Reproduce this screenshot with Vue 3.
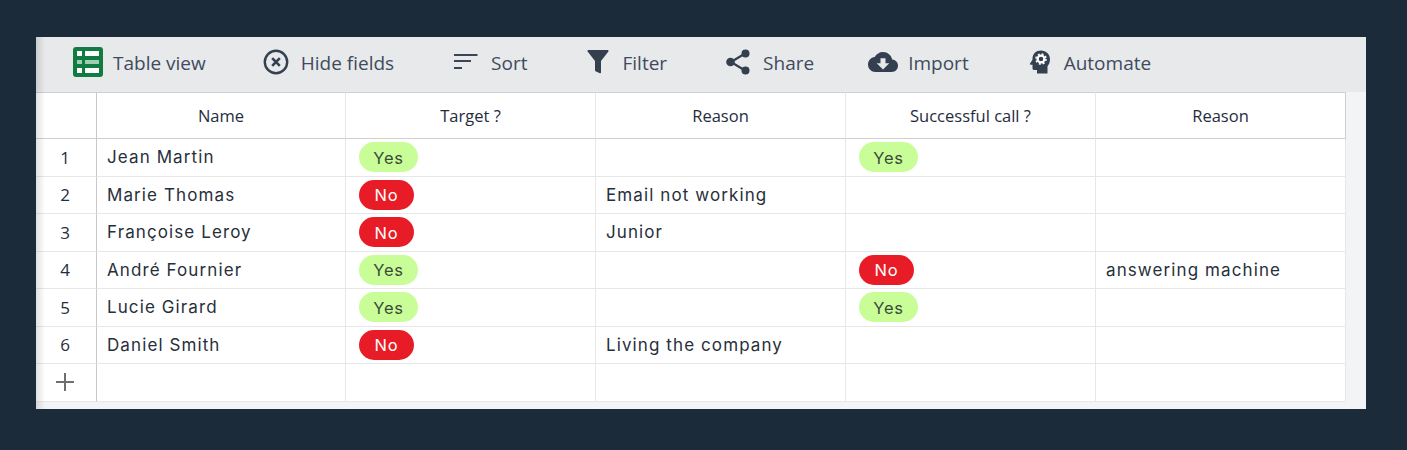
<script setup>
const tools = [
  { label: 'Table view', key: 'table' },
  { label: 'Hide fields', key: 'hide' },
  { label: 'Sort', key: 'sort' },
  { label: 'Filter', key: 'filter' },
  { label: 'Share', key: 'share' },
  { label: 'Import', key: 'import' },
  { label: 'Automate', key: 'auto' },
]
const heads = ['Name', 'Target ?', 'Reason', 'Successful call ?', 'Reason']
const rows = [
  ['Jean Martin', 'Yes', '', 'Yes', ''],
  ['Marie Thomas', 'No', 'Email not working', '', ''],
  ['Françoise Leroy', 'No', 'Junior', '', ''],
  ['André Fournier', 'Yes', '', 'No', 'answering machine'],
  ['Lucie Girard', 'Yes', '', 'Yes', ''],
  ['Daniel Smith', 'No', 'Living the company', '', ''],
]
</script>

<template>
  <div class="page">
    <div class="panel">
      <div class="toolbar">
        <div v-for="t in tools" :key="t.key" class="tool" :class="'tool-' + t.key">
          <svg v-if="t.key === 'table'" width="30" height="30" viewBox="0 0 30 30">
            <rect width="30" height="30" rx="3" fill="#107c41" />
            <path d="M4 4h5v5H4zM12 4h14v5H12zM4 21h5v5H4zM12 21h14v5H12z" fill="#fff" />
            <path d="M4 13h5v4H4zM12 13h14v4H12z" fill="#9fcfb1" />
          </svg>
          <svg v-else-if="t.key === 'hide'" width="26" height="26" viewBox="0 0 26 26">
            <circle cx="13" cy="13" r="11.2" fill="none" stroke="#34404f" stroke-width="2.4" />
            <path d="M9.2 9.2l7.6 7.6M16.8 9.2l-7.6 7.6" stroke="#34404f" stroke-width="2.6" />
          </svg>
          <svg v-else-if="t.key === 'sort'" width="24" height="18" viewBox="0 0 24 18">
            <path d="M0 2h23.500M0 8h17M0 15h8" stroke="#3a4656" stroke-width="2.200" fill="none" />
          </svg>
          <svg v-else-if="t.key === 'filter'" width="22" height="26" viewBox="0 0 22 26">
            <path d="M1.300 1h19.400c.8 0 1.100.8.7 1.400L14 12v11.500c0 .7-.5 1-1.100.7L9 22.500c-.6-.3-1-.7-1-1.300V12L.6 2.400C.2 1.800.5 1 1.300 1z" fill="#34404f" />
          </svg>
          <svg v-else-if="t.key === 'share'" width="24" height="26" viewBox="0 0 24 26">
            <path d="M19 4.500L5 13l14 8.500" stroke="#34404f" stroke-width="2.200" fill="none" />
            <circle cx="19.500" cy="4.500" r="4" fill="#34404f" />
            <circle cx="4.500" cy="13" r="4.300" fill="#34404f" />
            <circle cx="19.500" cy="21.500" r="4" fill="#34404f" />
          </svg>
          <svg v-else-if="t.key === 'import'" width="30" height="30" viewBox="0 0 24 24">
            <path fill="#34404f" d="M19.350 10.040C18.670 6.590 15.640 4 12 4 9.110 4 6.600 5.640 5.350 8.040 2.340 8.360 0 10.910 0 14c0 3.310 2.690 6 6 6h13c2.760 0 5-2.240 5-5 0-2.640-2.050-4.780-4.650-4.960zM17 13l-5 5-5-5h3V9h4v4h3z" />
          </svg>
          <svg v-else width="24" height="26" viewBox="0 0 24 26">
            <path fill="#34404f" d="M13 1.500C8 1.500 4.500 5 4.500 9.800c0 .5-.1 1-.3 1.400L2 14.600c-.3.6 0 1.100.6 1.100h1.900v3.500c0 1 .8 1.800 1.800 1.800H9v3.500h10.500v-7.200c1.500-1.800 2.500-4 2.500-7C22 5 18 1.500 13 1.500z" />
            <circle cx="13" cy="10" r="3.400" fill="none" stroke="#fff" stroke-width="2.200" />
            <circle cx="13" cy="10" r="5" fill="none" stroke="#fff" stroke-width="1.600" stroke-dasharray="2 1.930" />
          </svg>
          <span class="tool-label">{{ t.label }}</span>
        </div>
      </div>
      <div class="grid">
        <div class="cell head num"></div>
        <div v-for="(h, i) in heads" :key="'h' + i" class="cell head">{{ h }}</div>
        <template v-for="(r, ri) in rows" :key="ri">
          <div class="cell num">{{ ri + 1 }}</div>
          <div v-for="(c, ci) in r" :key="ci" class="cell body">
            <span v-if="c === 'Yes' || c === 'No'" class="pill" :class="c === 'Yes' ? 'yes' : 'no'">{{ c }}</span>
            <template v-else>{{ c }}</template>
          </div>
        </template>
        <div class="cell num plus">
          <svg width="18" height="18" viewBox="0 0 18 18">
            <path d="M0 9h18M9 0v18" stroke="#6f6f6f" stroke-width="2" />
          </svg>
        </div>
        <div v-for="n in 5" :key="'e' + n" class="cell body"></div>
      </div>
    </div>
  </div>
</template>

<style>
html, body { margin: 0; background: #1c2b3a; }
</style>

<style scoped>
.page {
  height: 450px;
  box-sizing: border-box;
  padding: 37px 41px 0 36px;
  background: #1c2b3a;
  overflow: hidden;
}
.panel {
  position: relative;
  width: 1330px;
  height: 372px;
  background: #f3f4f6;
  overflow: hidden;
}
.panel::before {
  content: "";
  position: absolute;
  left: 0;
  top: 0;
  bottom: 0;
  width: 9px;
  background: linear-gradient(to right, rgba(0, 0, 0, .12), rgba(0, 0, 0, 0));
  z-index: 2;
  pointer-events: none;
}
.toolbar {
  height: 55px;
  box-sizing: border-box;
  background: #e8e9eb;
  display: flex;
  align-items: center;
  padding: 0 0 5px 37px;
}
.tool {
  display: flex;
  align-items: center;
  color: #3f4b5c;
  font-family: "Open Sans", sans-serif;
  font-size: 19px;
  white-space: nowrap;
}
.tool-label { display: block; padding-top: 1px; }
.tool-table { margin-right: 57px; }
.tool-table svg { margin-right: 10px; }
.tool-hide { margin-right: 60px; }
.tool-hide svg { margin-right: 12px; }
.tool-sort { margin-right: 59px; }
.tool-sort svg { margin-right: 13px; }
.tool-filter { margin-right: 59px; }
.tool-filter svg { margin-right: 14px; }
.tool-share { margin-right: 54px; }
.tool-share svg { margin-right: 13px; }
.tool-import { margin-right: 61px; }
.tool-import svg { margin-right: 10px; }
.tool-auto svg { margin-right: 12px; margin-left: -2px; }
.grid {
  display: grid;
  grid-template-columns: 61px 249px repeat(4, 250px);
  grid-template-rows: 47px repeat(7, 37.5px);
  width: 1310px;
  background: #fff;
}
.cell {
  box-sizing: border-box;
  border-right: 1px solid #e7e7e7;
  border-bottom: 1px solid #e7e7e7;
  display: flex;
  align-items: center;
  color: #1f2d3d;
}
.head {
  justify-content: center;
  font-family: "Open Sans", sans-serif;
  font-size: 16.500px;
  border-top: 1px solid #cfcfcf;
  border-bottom-color: #cfcfcf;
}
.grid .cell:nth-child(6) { border-right-color: #cfcfcf; }
.num {
  justify-content: center;
  font-family: "Open Sans", sans-serif;
  font-size: 17px;
  border-right-color: #c8c8c8;
  padding-right: 2px;
}
.body {
  padding-left: 10px;
  font-family: "Inter", sans-serif;
  font-size: 17px;
  letter-spacing: 1.100px;
  white-space: nowrap;
  color: #272f3a;
}
.pill {
  box-sizing: border-box;
  height: 30px;
  padding-top: 1px;
  border-radius: 15px;
  display: inline-flex;
  align-items: center;
  justify-content: center;
  margin-left: 3px;
  font-size: 16.500px;
  letter-spacing: .8px;
}
.yes { width: 59px; background: #c8fd98; color: #3c4a3a; }
.no { width: 55px; background: #e81c26; color: #fff; }
</style>
